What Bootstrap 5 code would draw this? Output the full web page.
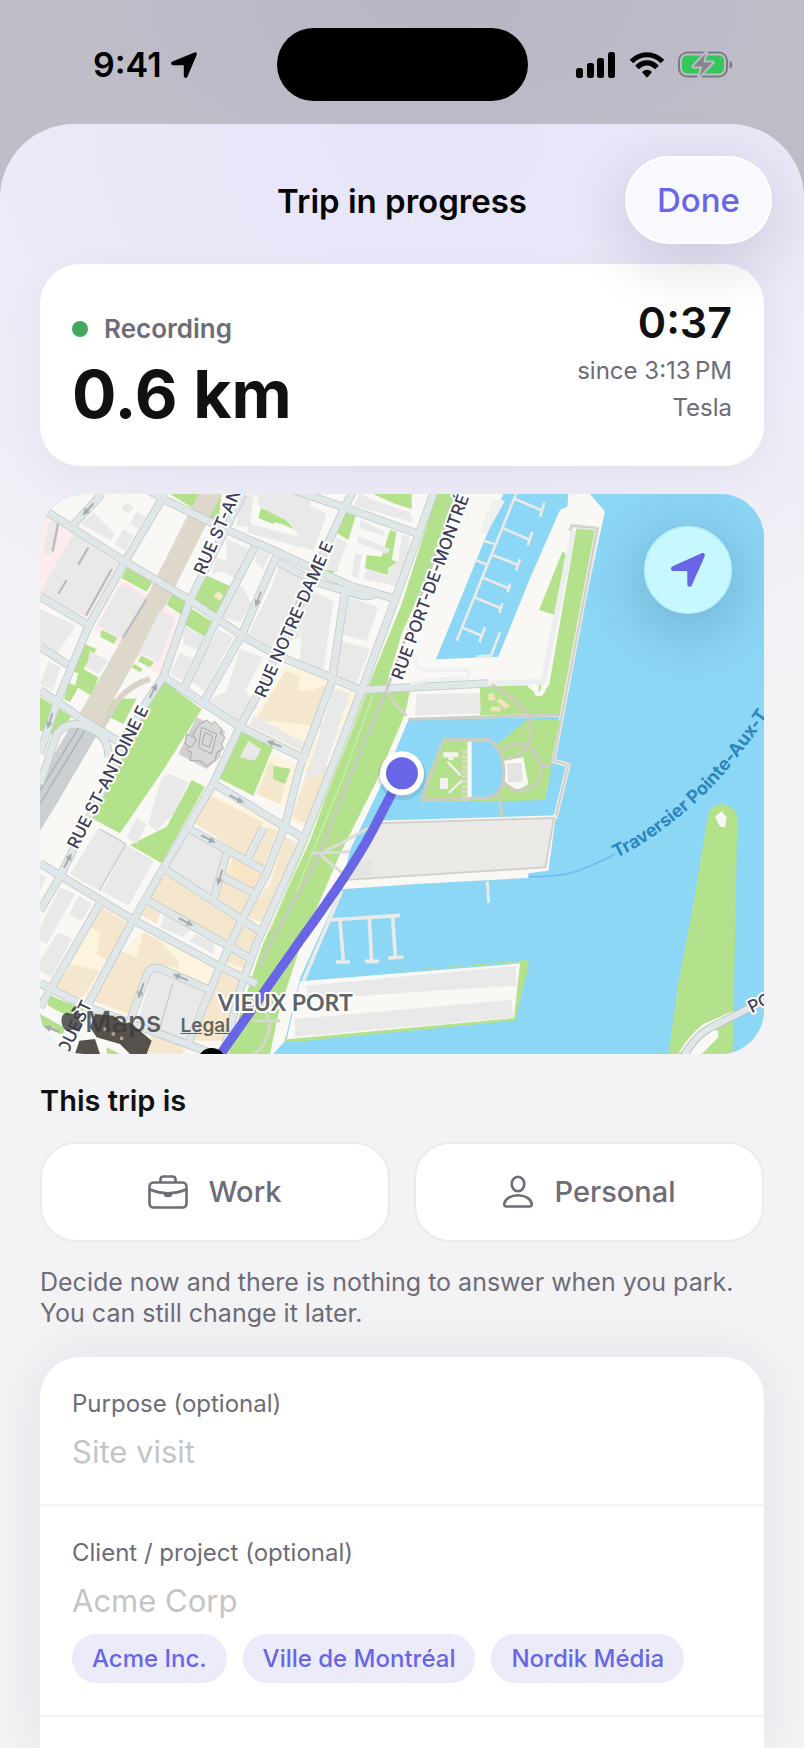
<!DOCTYPE html>
<html lang="en">
<head>
<meta charset="utf-8">
<meta name="viewport" content="width=device-width, initial-scale=1">
<title>Trip in progress</title>
<link href="https://cdn.jsdelivr.net/npm/bootstrap@5.3.0/dist/css/bootstrap.min.css" rel="stylesheet">
<style>
  :root { --ink:#111113; --muted-ink:#6d6c78; --accent:#6866e6; }
  body { font-family: Inter, "Liberation Sans", sans-serif; color: var(--ink); background: #bcbbc6; overflow-x: hidden; }
  button, input { font-family: inherit; }
  .screen { min-height: 100vh; background: radial-gradient(ellipse at 55% 0, #b8b6c4, #bebdc8 60%) top / 100% 240px no-repeat, #bfbec6; }
  .status { display: grid; grid-template-columns: minmax(0,1fr) auto minmax(0,1fr); padding: 28px 0 23px; color: #000; }
  .status-time { padding-left: 93px; font-size: 34px; line-height: 40px; }
  .status-icons { padding-right: 71px; }
  .island { width: 251px; height: 73px; border-radius: 37px; background: #000; }
  .sheet { border-radius: 74px 74px 0 0; background: radial-gradient(ellipse 760px 620px at 54% 0, #e6e4f9, #ebe9f8 50%, #f3f3f6); }
  .sheet-head { display: grid; grid-template-columns: 1fr auto 1fr; padding: 32px 32px 20px; }
  .sheet-title { font-size: 33px; line-height: 40px; padding-top: 2px; color: #050506; }
  .done-btn { height: 88px; padding: 2px 30px 0; border: 2px solid #fff; border-radius: 44px; background: #f9f8ff; color: var(--accent); font-size: 33px; box-shadow: 0 16px 64px rgba(20,20,50,.16); z-index: 2; }
  .sheet-body { padding: 0 40px; }
  .panel { background: #fff; border-radius: 40px; box-shadow: 0 12px 40px rgba(30,30,60,.05); }
  .trip { padding: 32px; margin-bottom: 28px; min-height: 202px; }
  .dot { width: 16px; height: 16px; border-radius: 50%; background: #45a75c; }
  .rec { font-size: 26px; line-height: 32px; color: var(--muted-ink); padding-top: 17px; }
  .dist { font-size: 66px; line-height: 72px; padding-top: 13px; }
  .clock { font-size: 43px; line-height: 52px; margin-bottom: 4px; }
  .small-line { font-size: 24px; line-height: 37px; color: var(--muted-ink); }
  .map { height: 560px; border-radius: 44px; overflow: hidden; background: #8cd6f6; }
  .map > svg { width: 100%; height: 100%; display: block; }
  .locate { top: 32px; right: 32px; width: 88px; height: 88px; background: #c8f8ff; border: 2px solid #bdf3fd; box-shadow: 0 12px 64px rgba(20,50,80,.28); }
  .attrib { left: 21px; bottom: 12px; color: rgba(60,60,62,.82); }
  .attrib svg { flex: none; margin-right: 2px; }
  .attrib-name { font-size: 29px; line-height: 40px; }
  .attrib a { color: rgba(75,75,75,.85); font-size: 19px; margin-left: 19px; }
  .section-title { font-size: 29px; line-height: 36px; margin: 29px 0 23px; }
  .choice { flex: 1; height: 100px; background: #fff; border: 2px solid #ebebee; border-radius: 36px; color: var(--muted-ink); font-size: 29px; }
  .hint { font-size: 25px; line-height: 31px; color: var(--muted-ink); margin: 25px 0 28px; }
  .form-panel { border-radius: 40px 40px 0 0; box-shadow: 0 0 60px rgba(30,30,50,.07); }
  .form-row { padding: 32px 32px 0; border-bottom: 2px solid #f4f4f5; }
  .form-row label { display: block; font-size: 24px; line-height: 30px; color: var(--muted-ink); }
  .form-row input { width: 100%; border: 0; outline: 0; padding: 0; font-size: 31px; line-height: 48px; height: 48px; background: none; margin-top: 9px; }
  .form-row input::placeholder { color: #c5c5c7; opacity: 1; }
  .purpose-row { padding-bottom: 28px; }
  .chips { padding: 9px 0 32px; }
  .chip { height: 49px; border: 0; border-radius: 25px; padding: 0 20px; background: #ecebfa; color: var(--accent); font-size: 24px; white-space: nowrap; }
  .label-st { font-family: Inter, sans-serif; font-size: 51px; font-weight: 500; fill: #3c3c56; stroke: #fff; stroke-width: 12px; paint-order: stroke; stroke-linejoin: round; }
</style>
</head>
<body>
<div class="screen d-flex flex-column">
  <header class="status align-items-center">
    <div class="status-time fw-semibold d-flex align-items-center gap-2">
      <span>9:41</span>
      <svg width="28" height="28" viewBox="0 0 28 28" aria-hidden="true"><path d="M24.400 1.500C26 .8 27.400 2.200 26.700 3.800L17.500 25.500C16.600 27.800 13.800 27.200 13.800 24.800V14.900Q13.800 14.200 13.100 14.200H3.200C.8 14.200.3 11.500 2.500 10.500Z"/></svg>
    </div>
    <div class="island"></div>
    <div class="status-icons d-flex justify-content-end align-items-center">
      <svg width="158" height="30" viewBox="0 0 158 30" aria-label="Signal, Wi-Fi, battery charging" role="img">
        <rect x="1" y="18" width="7" height="10" rx="2.500"/><rect x="12" y="13" width="7" height="15" rx="2.500"/><rect x="22" y="8" width="7" height="20" rx="2.500"/><rect x="33" y="2" width="7" height="26" rx="2.500"/>
        <g fill="none" stroke="#000" stroke-width="5.200"><path d="M56.500 11.500C65.500 2.500 78.500 2.500 87.500 11.500"/><path d="M62 17.500C68 11.300 76 11.300 82 17.500"/></g>
        <path d="M67 22Q72 17.500 77 22L72.800 27Q72 27.800 71.200 27Z"/>
        <rect x="104" y="2.500" width="48" height="24" rx="8" fill="none" stroke="#7d7c84" stroke-width="2"/>
        <rect x="107" y="5.500" width="42" height="18" rx="5" fill="#34c759"/>
        <path d="M154.500 11q3 1 3 3.800t-3 3.800z" fill="#7d7c84"/>
        <path d="M132.500 0L117.500 16Q117 17.500 118.500 17.500H126L122.500 29.500L138.500 13Q139 11.500 137.500 11.500H129.500Z" fill="#85858b" stroke="#bcbbc6" stroke-width="2"/>
      </svg>
    </div>
  </header>

  <main class="sheet flex-grow-1 d-flex flex-column">
    <div class="sheet-head align-items-center">
      <span></span>
      <h1 class="sheet-title fw-semibold mb-0">Trip in progress</h1>
      <button type="button" class="done-btn fw-medium ms-auto position-relative">Done</button>
    </div>

    <div class="sheet-body flex-grow-1 d-flex flex-column">
      <section class="panel trip d-flex justify-content-between">
        <div>
          <div class="rec fw-semibold d-flex align-items-center gap-3"><span class="dot"></span><span>Recording</span></div>
          <div class="dist fw-bold">0.6 km</div>
        </div>
        <div class="text-end">
          <div class="clock fw-semibold">0:37</div>
          <div class="small-line">since 3:13&#8239;PM</div>
          <div class="small-line">Tesla</div>
        </div>
      </section>

      <section class="map position-relative" aria-label="Map">
        <svg viewBox="0 0 2172 1680" preserveAspectRatio="xMidYMid slice">
          <!-- water and land -->
          <rect width="2172" height="1680" fill="#8cd6f6"/>
          <path fill="#f9f8f4" d="M0 0H1390L1188 496L1375 488L1470 253L1560 48L1582 38L1585 0H1650L1695 53L1680 120L1562 668L1105 678L1025 870L930 1068L905 1178L780 1453L735 1640L700 1680H0Z"/>
          <path d="M1380 1146C1480 1150 1560 1150 1610 1132Q1680 1105 1725 1080" fill="none" stroke="#75bbea" stroke-width="5"/>
          <!-- rose hospital grounds -->
          <path fill="#fdeceb" d="M15 50L250 200L145 390L0 305V60ZM245 255L415 362L360 545L160 408Z"/>
          <!-- parks -->
          <g fill="#b4e28c">
            <path d="M1190 0H1270L1085 420L1035 590H1110L1095 660L1010 860L900 1080L780 1360L715 1560L690 1680H565L600 1560L665 1360L700 1280L810 1040L880 850L975 600L1085 330Z"/>
            <path d="M1610 98L1672 105L1562 660L1320 663V578L1460 574Q1500 620 1528 570Z"/>
            <path d="M1567 173L1577 178L1545 363L1497 348Z"/>
            <path d="M390 0H545L535 85L470 50ZM265 210L340 258L320 293L245 253ZM395 300L440 323L425 363L380 333ZM490 240L578 280L530 375L455 318ZM440 335L520 385L498 430L430 390Z"/>
            <path d="M370 560L485 645L370 828L240 1018L150 970L230 740L330 600ZM205 618L290 613L250 690L190 660Z"/>
            <path d="M455 858L495 878L365 1108L270 1053L380 998ZM605 713L700 760L640 905L530 850Z"/>
            <path d="M0 608L95 668L40 723L0 710ZM135 450L170 465L120 540L95 530ZM120 520L175 550L155 605L105 575ZM85 565L115 580L90 625L72 615ZM185 408L232 430L222 450L180 428ZM305 485L342 505L330 520L294 502ZM283 510L308 525L300 535L275 520Z"/>
            <path d="M665 35L700 50L705 62L770 72L765 84L790 100L795 112L760 105L725 90L705 85L700 90L655 72Z"/>
            <path d="M1000 0H1115V45L1060 28ZM905 53L948 63L925 138L885 113ZM1050 108L1070 113L1055 198L1085 208L1075 223L1048 218L1042 243L975 223L980 183L1025 188ZM920 150L880 240L850 230L885 225Z"/>
            <path d="M20 1500L130 1545L120 1585L25 1535ZM0 1560L90 1610L60 1620L0 1590ZM200 1660L240 1680H200Z"/>
          </g>
          <!-- rail corridor -->
          <path fill="#ded8cb" d="M475 0H545L385 318L172 705L118 660L330 288Z"/>
          <path fill="none" stroke="#d9d2c6" stroke-width="18" d="M330 555Q250 580 215 650L185 700"/>
          <path fill="#cbd1d3" d="M95 693L170 725L50 930L0 1010V850Z"/><path d="M140 700L0 930M120 695L0 890" fill="none" stroke="#aab1b4" stroke-width="4"/>
          <!-- sand blocks -->
          <g fill="#fdf4df">
            <path d="M740 515L880 555L780 800L620 700Z"/><path d="M890 580L955 600L840 840L780 828Z"/><path d="M500 890L720 990L680 1120L455 985Z"/><path d="M690 780L790 820L740 940L650 900Z"/><path d="M720 1025L780 1050L690 1290L610 1280Z"/><path d="M375 1130L600 1270L560 1350L325 1210Z"/><path d="M560 1080L680 1140L610 1260L525 1220Z"/><path d="M180 1230L270 1290L140 1510L40 1485Z"/><path d="M300 1310L530 1410L500 1480L350 1430L270 1570L155 1520Z"/><path d="M580 1290L660 1320L620 1460L540 1410Z"/><path d="M540 1420L620 1450L560 1640L450 1640Z"/><path d="M340 1600L440 1650V1680H300Z"/><path d="M805 850H870L800 1000L750 980Z"/>
          </g>
          <g fill="#f5e7cd">
            <path d="M735 530L780 545L775 590H820L850 700L700 680L640 690Z"/><path d="M780 600L868 570L820 700L790 690Z"/>
            <path d="M510 905L670 985L625 1095L455 980Z"/><path d="M685 1000L712 1012L670 1120L632 1100Z"/><path d="M735 1028L770 1045L710 1210L680 1200ZM680 1178L710 1195L670 1285L620 1268Z"/><path d="M375 1140L595 1280L555 1345L330 1210ZM335 1223L365 1245L350 1290L298 1260Z"/>
            <path fill="#fbe5c9" d="M580 1090L672 1140L650 1188L558 1140Z"/><path d="M550 1150L640 1200L600 1260L530 1210Z"/><path d="M185 1240L265 1290L205 1400L170 1380L180 1320L155 1300ZM95 1410L180 1430L120 1520L45 1480Z"/><path d="M310 1315L360 1340L415 1400V1420L335 1415L270 1560L160 1520L240 1370L290 1390Z"/><path d="M600 1290L655 1320L640 1380L580 1350ZM570 1365L630 1390L620 1425L560 1405ZM545 1425L612 1455L590 1550L555 1640L460 1640L515 1500Z"/><path d="M345 1605L430 1650V1680H310ZM690 800L740 850L720 930L650 900ZM815 790L870 820L800 990L755 970Z"/>
          </g>
          <g fill="#b4e28c"><path d="M700 815L752 825L735 870L700 855Z"/></g>
          <!-- buildings -->
          <g fill="#e9e9ea">
            <path d="M30 80L58 90L40 180H10ZM100 120L235 210L140 365L60 345L0 300L30 240Z"/><path d="M245 268L325 315L245 435L172 392ZM360 350L405 372L355 505L300 470Z"/><path d="M0 345L108 395L50 480L0 450ZM150 470L205 500L175 540L140 520ZM25 500L60 520L40 590L0 570Z"/>
            <path d="M160 55L225 120L210 140L125 90ZM255 25L280 40L265 60L245 45ZM290 50L318 70L295 105L270 90ZM250 105L280 125L255 170L225 150Z"/>
            <path d="M560 135L625 165L590 255L545 230L515 240L530 190L560 200ZM585 270L610 280L635 330L600 385L548 370ZM655 165L690 180L670 225L645 205Z"/><path d="M715 220L800 240L780 430L700 460L625 420L650 370L690 290Z"/>
            <path d="M430 395L497 430L475 470L430 450ZM420 475L460 495L430 560L390 540ZM535 405L580 430L495 590L450 560ZM600 465L670 490L615 590L655 640L585 685L505 620L560 590Z"/>
            <path d="M600 10L640 0L630 100L590 95ZM650 0H810V90L780 160L620 115L630 90L780 130L740 80L660 40Z"/><path d="M640 665L790 745L785 770L630 695ZM625 740L663 765L645 800L600 790Z" /><path d="M470 670L555 710L540 790L500 825L415 780Z" fill="#cfcfd0"/>
            <path d="M780 20L860 60L820 170L780 155ZM960 0L1005 20L1110 55L1120 85L940 35ZM960 78L1030 110L1035 125L960 105ZM955 125L1050 165L1040 180L950 145ZM1085 120L1110 130L1090 280L970 255L980 225L1040 245L1055 215L1075 200ZM945 178L965 180L955 255L935 245ZM890 130L920 145L890 235L860 225Z"/>
            <path d="M925 310L1015 340L980 440L905 420ZM900 440L990 465L945 580L890 560ZM790 280L880 320L850 530L780 500Z"/>
            <path d="M880 585L928 600L850 840L800 850Z"/><path d="M1130 600L1320 598L1322 658L1125 665Z"/>
            <path d="M175 1003L258 1050L178 1190L90 1140ZM258 1053L342 1100L265 1235L185 1190ZM390 840L445 865L400 960L350 1010L325 990L365 850ZM290 970L320 990L290 1050L260 1030Z"/><path d="M445 1008L560 1080L510 1200L385 1118ZM375 1255L460 1300L430 1330L360 1300ZM465 1320L525 1345L520 1380L450 1340Z"/><path d="M60 1180L105 1200L20 1350L0 1340V1300ZM115 1205L155 1230L125 1280L88 1260ZM55 1315L95 1335L35 1450L0 1430V1400ZM0 1140L20 1150L0 1190Z"/><path d="M340 1430L495 1490L430 1640L290 1590Z"/>
            <path d="M1340 120L1395 20L1360 15L1320 110Z" fill="#f0f0ee"/>
          </g>
          <path d="M215 225L138 365M320 315L248 432M145 160L115 212M55 85L38 172M80 258L55 300" stroke="#bcbcbe" stroke-width="7" fill="none"/>
          <path d="M258 1050L178 1190M180 1005L258 1050M398 1470L360 1600" stroke="#c9c9ca" stroke-width="4" fill="none"/>
          <g stroke="#aaa" stroke-width="3" fill="#d8d8d8"><path d="M480 690L500 678L515 690L525 683L545 705L540 718L555 730L545 750L550 765L530 775L525 800L500 815L480 800L450 800L455 775L440 765L465 740L460 720Z"/><path d="M485 700L530 720L515 780L475 760ZM440 720L470 735L455 760L435 750Z"/><path d="M495 715L518 727L508 760L486 750Z"/></g>
          <g fill="#f4e8cb"><path d="M535 290L550 305L540 320L520 305Z"/></g>

          <!-- streets -->
          <defs>
            <g id="streets">
              <path d="M0 40L255 203L450 318L610 428L725 490L860 545L960 588L1345 568"/>
              <path d="M310 -20L375 18L560 108L710 173L820 225L930 275L1060 313"/><path d="M715 205L830 265L965 305Q1000 310 1015 290"/><path d="M760 -12L920 43L1130 118"/>
              <path d="M0 308L145 393M0 458L85 513M0 588L130 678L240 745M370 548L600 698L800 798"/>
              <path d="M0 1108L280 1278L540 1418L650 1470M0 1468L140 1538L440 1650L520 1680M520 868L800 1038M445 1003L670 1128M370 1123L600 1273L670 1318M320 1218L640 1398M550 1150L650 1200"/>
              <path d="M375 0L255 203L145 398L50 628L0 778M185 0L100 93M450 318L370 548L310 640L60 1148L0 1250M610 0L450 318"/>
              <path d="M645 158L530 378L430 588M710 185L605 423L490 628"/><path d="M940 -10L910 48L660 588L600 698L520 868L370 1123L280 1278L140 1538"/>
              <path d="M1180 0L1065 318L965 588L865 848L790 1038L650 1348L600 1488L550 1680"/>
              <path d="M915 293L875 563L780 818L735 993L680 1138L600 1288L540 1418L440 1658"/><path d="M180 1228L30 1488L0 1540M270 1580L320 1445Q330 1415 360 1423L510 1488M560 1078L520 1218M670 1000L620 1100"/>
              <path d="M0 870L50 720Q80 680 130 695Q210 720 205 790"/>
            </g>
          </defs>
          <use href="#streets" fill="none" stroke="#c3cbcd" stroke-width="25" stroke-linejoin="round"/>
          <use href="#streets" fill="none" stroke="#e0e7e9" stroke-width="20" stroke-linejoin="round"/>

          <!-- pier roads and paths -->
          <g fill="none" stroke-linejoin="round">
            <path d="M1345 568L1510 562L1600 110" stroke="#eceff0" stroke-width="16"/>
            <path d="M1125 490Q1130 530 1170 530L1285 528V552L1180 556L1110 570" stroke="#eef1f1" stroke-width="10"/>
            <path d="M1590 110L1595 95L1672 103L1540 800L1585 813L1545 975" stroke="#e9e8e4" stroke-width="14"/>
            <path d="M1590 110L1595 95L1672 103L1540 800L1585 813L1545 975" stroke="#cfcdc7" stroke-width="5"/>
            <path d="M1245 20L1040 588L930 850L830 1100L700 1330L660 1420" stroke="#c9c9c6" stroke-width="8"/>
            <path d="M1040 588Q1060 630 1100 665" stroke="#d6d2ca" stroke-width="8"/>
            <path d="M980 600L880 850L740 1190L690 1310M1000 600L910 850L770 1190" stroke="#cdeab0" stroke-width="4"/>
            <path d="M1010 988L900 1050Q830 1080 850 1090L910 1140M815 1078L930 1073" stroke="#dcdcd8" stroke-width="9"/>
            <path d="M660 1500Q680 1560 690 1590Q680 1660 640 1680M640 1580H720" stroke="#d4d8cc" stroke-width="9"/>
          </g>
          <path d="M1490 572Q1485 600 1495 600Q1512 600 1510 572" fill="#b4e28c" stroke="#f9f8f4" stroke-width="14"/>
          <path d="M1345 600L1362 596L1365 620L1345 618ZM1380 612L1410 635L1395 645L1370 622ZM1352 638H1382V652H1352Z" fill="#f1e3c0"/>

          <!-- park basin -->
          <path fill="#b4e28c" d="M1140 923L1165 838L1210 730L1375 748L1460 678L1560 678L1532 808V838L1515 918L1340 923L1300 920Z"/>
          <path fill="#8cd6f6" d="M1292 743H1350Q1392 775 1392 840Q1390 895 1345 908L1292 912Z"/><path fill="#f9f8f4" d="M1282 743H1295V910H1282Z"/>
          <path fill="#f9f8f4" d="M1388 800L1450 790L1465 870L1430 890L1392 860Z"/><path fill="#e4e4e4" d="M1400 808H1445L1448 865H1405Z"/>
          <path fill="none" stroke="#cfccc4" stroke-width="9" d="M1150 905L1210 738L1345 736Q1392 765 1392 840Q1390 905 1340 912L1150 917ZM1105 676L1562 662M1355 572Q1480 640 1472 720Q1460 790 1395 795M1385 770Q1430 735 1470 760Q1510 800 1502 850Q1480 890 1430 890Q1400 880 1390 865M1502 815H1535M1380 905L1385 970"/>
          <path d="M1210 775H1255V790H1240V798H1225V790H1210ZM1200 852H1224V885H1200Z" fill="#f2f2ef"/><path d="M1222 803L1262 845M1226 897L1265 860" stroke="#efefec" stroke-width="7" fill="none"/><path d="M1273 768V922" stroke="#d5dcc8" stroke-width="14" stroke-dasharray="10 5"/>

          <!-- concrete pier -->
          <path fill="#f9f8f4" d="M1000 980L1548 964L1525 1130L1465 1138V1152L1130 1170L905 1186Z"/><path fill="#ebeae7" stroke="#d3d1cb" stroke-width="6" d="M1015 988L1542 972L1516 1120L915 1158Z"/><path fill="#e4e4e4" d="M945 1098L995 1095L998 1145L930 1148Z"/>
          <path d="M1342 1162L1346 1226" stroke="#eaeae8" stroke-width="9"/>

          <!-- marina pontoons -->
          <g fill="none" stroke="#eaeae8" stroke-width="8">
            <path d="M1428 0L1250 440M1425 15L1503 48M1513 26L1500 68M1390 103L1468 137M1477 113L1463 155M1355 182L1433 212M1440 195L1428 230M1325 250L1405 283M1410 268L1403 295M1302 310L1383 343M1387 328L1378 357M1265 400L1325 425M1335 400L1318 445M1330 140L1370 152M1305 198L1345 213M1380 415L1353 485L1310 488"/>
            <path stroke-width="11" d="M868 1278L1080 1264M900 1280L910 1402M888 1404H930M988 1272L995 1402M975 1402H1017M1058 1268L1066 1390M1045 1392L1090 1389M905 1190L790 1460"/>
          </g>

          <!-- Vieux-Port quay -->
          <path fill="#b4e28c" d="M1020 1435L1465 1398V1420L1425 1580L780 1642L735 1645V1632L1420 1570L1435 1405Z"/>
          <path fill="#f9f8f4" d="M780 1462L1440 1408L1422 1572L740 1636Z"/><path fill="#e9e9e9" d="M800 1475L1428 1416L1430 1475L800 1516ZM765 1575L1414 1518L1420 1570L765 1628Z"/>

          <!-- island with causeway -->
          <path fill="#b4e28c" d="M1885 1680L1915 1468L1960 1230L2003 968Q2010 932 2045 930Q2085 935 2092 968L2085 1328L2078 1680Z"/>
          <path fill="#f9f8f4" d="M2025 968L2045 952L2060 970L2055 1000L2040 998ZM1985 1680L2035 1630V1610L2010 1605L1930 1680ZM1915 1680Q1940 1630 1990 1590L2078 1552V1570Z"/>
          <path d="M1930 1690Q1960 1630 2010 1602L2172 1520" fill="none" stroke="#bfc4c4" stroke-width="24"/><path d="M1930 1690Q1960 1630 2010 1602L2172 1520" fill="none" stroke="#e0e7e9" stroke-width="18"/>

          <!-- basilica -->
          <path fill="#57514c" d="M165 1560L220 1565L250 1590L270 1585L335 1640L320 1680H270L240 1650L170 1630L150 1600ZM118 1640L165 1635L180 1680H105Z"/><path fill="#a9a29a" d="M190 1600h10v10h-10zM215 1615h10v10h-10zM240 1628h10v10h-10z"/>

          <!-- one-way arrows -->
          <defs><path id="arr" d="M-24 -3H4V-10L26 0L4 10V3H-24Z"/></defs>
          <g fill="#a7adb0">
            <use href="#arr" transform="translate(655 315) rotate(110)"/><use href="#arr" transform="translate(340 590) rotate(-63)"/><use href="#arr" transform="translate(703 750) rotate(202)"/><use href="#arr" transform="translate(30 680) rotate(108)"/>
            <use href="#arr" transform="translate(590 915) rotate(28)"/><use href="#arr" transform="translate(505 1035) rotate(28)"/><use href="#arr" transform="translate(540 1150) rotate(107)"/><use href="#arr" transform="translate(438 1284) rotate(28)"/><use href="#arr" transform="translate(422 1450) rotate(203)"/><use href="#arr" transform="translate(303 1490) rotate(109)"/><use href="#arr" transform="translate(83 1100) rotate(-63)"/><use href="#arr" transform="translate(35 1605) rotate(200)"/><use href="#arr" transform="translate(145 45) rotate(132)"/>
          </g>

          <!-- map labels -->
          <g class="label-st">
            <text transform="translate(493 245) rotate(-66)">RUE ST-AN</text>
            <text transform="translate(675 614) rotate(-66)">RUE NOTRE-DAME E</text>
            <text transform="translate(1087 560) rotate(-70)">RUE PORT-DE-MONTRÉ</text>
            <text transform="translate(112 1068) rotate(-63)">RUE ST-ANTOINE E</text>
            <text transform="translate(82 1686) rotate(-64)">OUEST</text>
            <text transform="translate(2135 1558) rotate(-27)">PO</text>
          </g>
          <path id="ferry" d="M1729 1092Q1850 1035 1985 910Q2080 820 2200 640" fill="none"/>
          <text font-family="Inter, sans-serif" font-size="54" font-weight="700" fill="#2d86bc"><textPath href="#ferry">Traversier Pointe-Aux-T</textPath></text>

          <!-- recorded track -->
          <path d="M528 1700L780 1340Q940 1120 1000 1005L1086 838" fill="none" stroke="#6866e6" stroke-width="28"/>
          <text x="533" y="1550" font-family="Lato, sans-serif" font-size="69" font-weight="700" fill="#5f6468" stroke="#fff" stroke-width="12" paint-order="stroke" stroke-linejoin="round">VIEUX PORT</text>
          <circle cx="515" cy="1704" r="42"/>
          <circle cx="1086" cy="846" r="73" fill="#345" opacity=".12"/><circle cx="1086" cy="838" r="66" fill="#fff"/><circle cx="1086" cy="838" r="48" fill="#6866e6"/>
        </svg>
        <button type="button" class="locate position-absolute rounded-circle d-flex align-items-center justify-content-center p-0" aria-label="Center on my location">
          <svg width="36" height="36" viewBox="0 0 36 36" aria-hidden="true"><path fill="#6866e6" d="M31.600 1.300C33.800.3 35.600 2.100 34.700 4.300L21.800 33.200C20.800 35.700 17.300 35.200 17.300 32.300V20Q17.300 19 16.300 19H3.500C.6 19 .1 15.300 2.600 14.200Z"/></svg>
        </button>
        <div class="attrib position-absolute d-flex align-items-baseline">
          <svg width="22" height="26" viewBox="0 0 22 26" aria-hidden="true"><path fill="currentColor" d="M15.500 0Q15.800 2.500 14.200 4.300T10.500 6Q10.200 3.700 11.800 2T15.500 0ZM20.800 8.800Q18.200 10.300 18.200 13.200T21.500 17.600Q19.300 24.500 15.800 24.800C14 24.900 13.300 23.800 11.200 23.800S8.500 24.900 6.800 25C3.800 25.100.4 19.500.4 14.300C.4 9 3.700 6.700 6.500 6.700C8.500 6.700 9.900 8 11.200 8S14.300 6.500 16.200 6.600Q19.200 6.700 20.800 8.800Z"/></svg>
          <span class="attrib-name fw-medium">Maps</span><a href="#legal" class="fw-semibold">Legal</a>
        </div>
      </section>

      <h2 class="section-title fw-semibold">This trip is</h2>
      <div class="d-flex gap-4">
        <button type="button" class="choice fw-medium d-flex align-items-center justify-content-center">
          <svg width="40" height="34" viewBox="0 0 40 34" class="me-3" fill="none" stroke="currentColor" stroke-width="2.600" aria-hidden="true"><rect x="1.500" y="7.500" width="37" height="25" rx="4"/><path d="M12.500 7V4.500Q12.500 1.500 15.500 1.500H24.500Q27.500 1.500 27.500 4.500V7M2 14.500Q20 22 38 14.500"/><path d="M16 18H24V20Q24 22 22 22H18Q16 22 16 20Z" fill="currentColor" stroke="none"/></svg><span class="ms-1">Work</span>
        </button>
        <button type="button" class="choice fw-medium d-flex align-items-center justify-content-center">
          <svg width="32" height="34" viewBox="0 0 32 34" class="me-3" fill="none" stroke="currentColor" stroke-width="2.600" aria-hidden="true"><ellipse cx="16" cy="9" rx="6.300" ry="7.200"/><path d="M4.500 31.500H27.500Q30 31.500 29.800 29C29 23.500 23 20.200 16 20.200S3 23.500 2.200 29Q2 31.500 4.500 31.500Z"/></svg><span class="ms-1">Personal</span>
        </button>
      </div>
      <p class="hint">Decide now and there is nothing to answer when you park. You can still change it later.</p>

      <form class="panel form-panel flex-grow-1">
        <div class="form-row purpose-row">
          <label for="purpose">Purpose (optional)</label>
          <input id="purpose" type="text" placeholder="Site visit">
        </div>
        <div class="form-row">
          <label for="client">Client / project (optional)</label>
          <input id="client" type="text" placeholder="Acme Corp">
          <div class="chips d-flex gap-3">
            <button type="button" class="chip fw-medium">Acme Inc.</button>
            <button type="button" class="chip fw-medium">Ville de Montréal</button>
            <button type="button" class="chip fw-medium">Nordik Média</button>
          </div>
        </div>
      </form>
    </div>
  </main>
</div>
<script src="https://cdn.jsdelivr.net/npm/bootstrap@5.3.0/dist/js/bootstrap.bundle.min.js"></script>
</body>
</html>
